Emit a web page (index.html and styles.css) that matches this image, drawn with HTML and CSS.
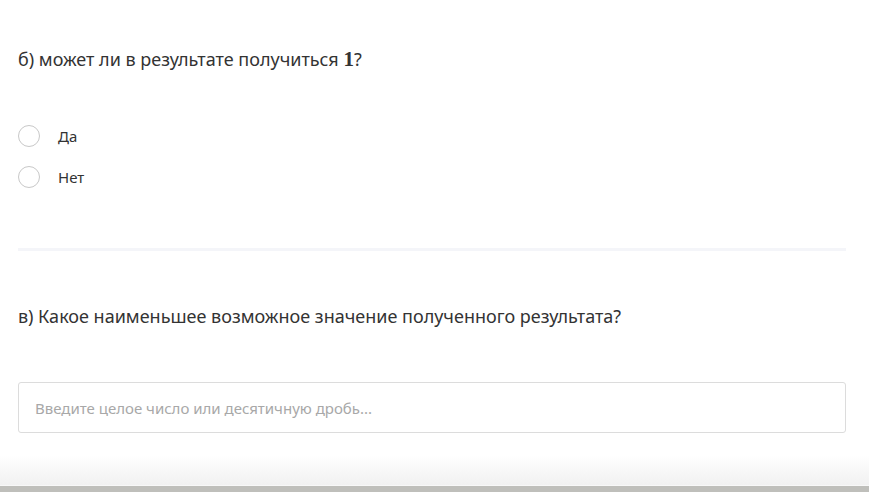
FILE: index.html
```html
<!DOCTYPE html>
<html lang="ru">
<head>
    <meta charset="UTF-8">
    <meta name="viewport" content="width=device-width, initial-scale=1.0">
    <title>Задание</title>
    <link rel="stylesheet" href="styles.css">
</head>
<body>
    <div class="page">
        <div class="task">
            <p class="question">б) может ли в результате получиться <span class="math">1</span>?</p>
            <div class="options">
                <label class="option"><span class="radio"></span>Да</label>
                <label class="option"><span class="radio"></span>Нет</label>
            </div>
        </div>

        <div class="divider"></div>

        <div class="task">
            <p class="question">в) Какое наименьшее возможное значение полученного результата?</p>
            <div class="answer">
                <input type="text" class="answer-input" placeholder="Введите целое число или десятичную дробь...">
            </div>
        </div>
    </div>
    <div class="footer-fade"></div>
    <div class="footer-bar"></div>
</body>
</html>
```

FILE: styles.css
```css
body { margin: 0; background: #fff; color: #333; font-family: "Noto Sans", "Open Sans", sans-serif; height: 492px; overflow: hidden; display: flex; flex-direction: column; }
.page { flex: 1; padding: 0 23px 0 18px; }
.question { margin: 0; font-size: 18px; line-height: 24px; }
.task:first-child .question { padding-top: 47px; }
.math { font-family: "Liberation Serif", serif; font-size: 21px; font-weight: bold; }
.options { display: flex; flex-direction: column; gap: 19px; padding-top: 54px; }
.option { display: flex; align-items: center; gap: 18px; font-size: 15px; line-height: 22px; }
.radio { width: 22px; height: 22px; border: 1px solid #c8c8c8; border-radius: 50%; box-sizing: border-box; }
.divider { height: 3px; background: #f4f5f9; margin-top: 60px; }
.task:last-child .question { padding-top: 53px; }
.answer { padding-top: 54px; }
.answer-input { width: 100%; box-sizing: border-box; height: 51px; border: 1px solid #dcdcdc; border-radius: 3px; padding: 0 16px; font-family: inherit; font-size: 15px; color: #333; outline: none; }
.answer-input::placeholder { color: #a8a8a8; }
.footer-fade { height: 30px; background: linear-gradient(#fff, #f1f1f1); border-bottom: 1px solid #f8f8f8; }
.footer-bar { height: 6px; background: #bfbfbb; }
```
